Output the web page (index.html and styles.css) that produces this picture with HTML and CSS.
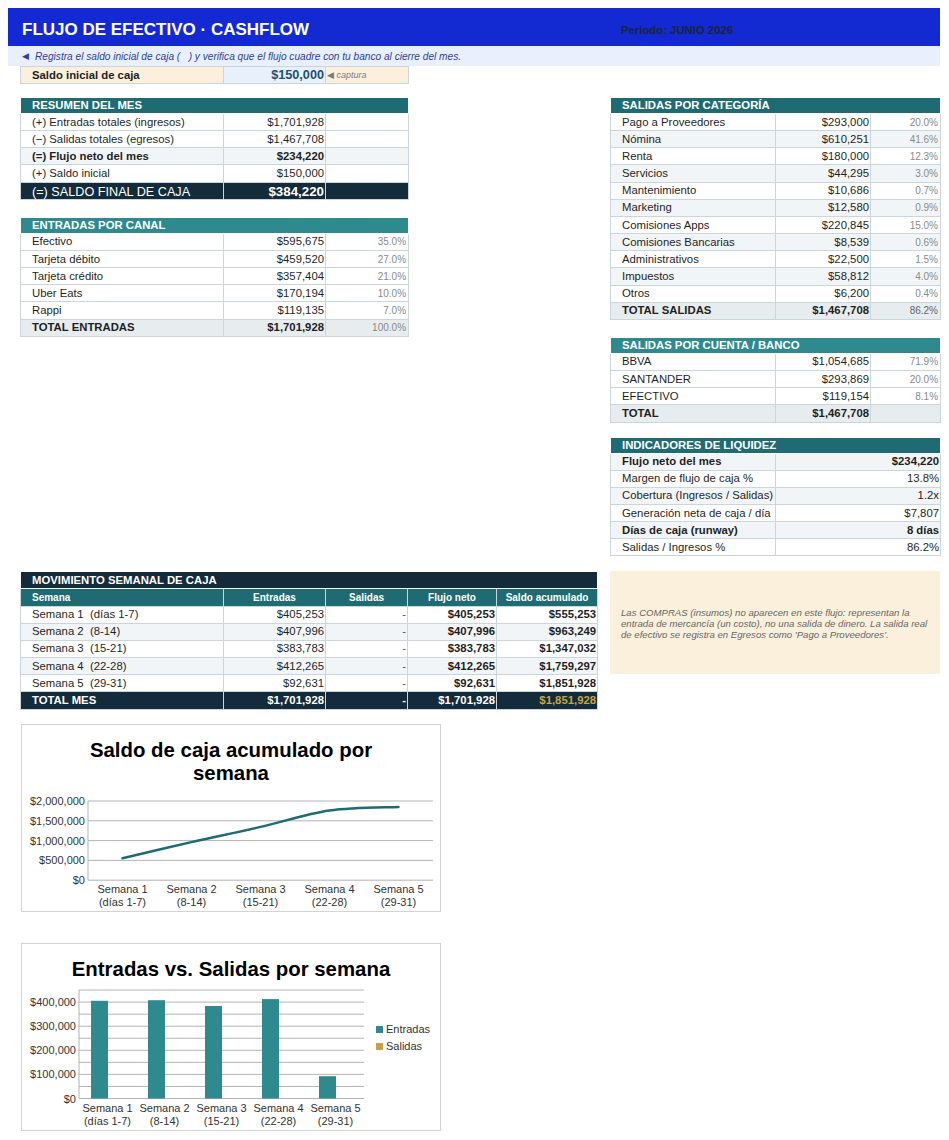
FILE: index.html
```html
<!DOCTYPE html>
<html lang="es">
<head>
<meta charset="utf-8">
<title>Flujo de efectivo · Cashflow</title>
<link rel="stylesheet" href="styles.css">
</head>
<body>
<header class="banner">
  <div class="banner-top">
    <h1>FLUJO DE EFECTIVO · CASHFLOW</h1>
    <span class="period">Periodo: JUNIO 2026</span>
  </div>
  <div class="banner-sub"><span class="arrow">◀</span><span class="sub-text">Registra el saldo inicial de caja (   ) y verifica que el flujo cuadre con tu banco al cierre del mes.</span></div>
</header>

<main class="sheet">
  <table class="grid saldo">
    <colgroup><col class="c-a"><col class="c-b"><col class="c-c"></colgroup>
    <tr>
      <td class="lbl bold cream">Saldo inicial de caja</td>
      <td class="num input">$150,000</td>
      <td class="cream hint">◀ captura</td>
    </tr>
  </table>

  <div class="top-grid">
    <div class="col-left">
      <table class="grid">
        <colgroup><col class="c-a"><col class="c-b"><col class="c-c"></colgroup>
        <tr class="sec dark"><td colspan="3">RESUMEN DEL MES</td></tr>
        <tr><td class="lbl">(+) Entradas totales (ingresos)</td><td class="num">$1,701,928</td><td></td></tr>
        <tr><td class="lbl">(−) Salidas totales (egresos)</td><td class="num">$1,467,708</td><td></td></tr>
        <tr class="alt bold"><td class="lbl">(=) Flujo neto del mes</td><td class="num">$234,220</td><td></td></tr>
        <tr><td class="lbl">(+) Saldo inicial</td><td class="num">$150,000</td><td></td></tr>
        <tr class="final"><td class="lbl">(=) SALDO FINAL DE CAJA</td><td class="num">$384,220</td><td></td></tr>
      </table>

      <table class="grid gap17">
        <colgroup><col class="c-a"><col class="c-b"><col class="c-c"></colgroup>
        <tr class="sec light"><td colspan="3">ENTRADAS POR CANAL</td></tr>
        <tr><td class="lbl">Efectivo</td><td class="num">$595,675</td><td class="pct">35.0%</td></tr>
        <tr><td class="lbl">Tarjeta débito</td><td class="num">$459,520</td><td class="pct">27.0%</td></tr>
        <tr><td class="lbl">Tarjeta crédito</td><td class="num">$357,404</td><td class="pct">21.0%</td></tr>
        <tr><td class="lbl">Uber Eats</td><td class="num">$170,194</td><td class="pct">10.0%</td></tr>
        <tr><td class="lbl">Rappi</td><td class="num">$119,135</td><td class="pct">7.0%</td></tr>
        <tr class="total"><td class="lbl bold">TOTAL ENTRADAS</td><td class="num bold">$1,701,928</td><td class="pct">100.0%</td></tr>
      </table>
    </div>

    <div class="col-right">
      <table class="grid">
        <colgroup><col class="r-a"><col class="r-b"><col class="r-c"></colgroup>
        <tr class="sec dark"><td colspan="3">SALIDAS POR CATEGORÍA</td></tr>
        <tr><td class="lbl">Pago a Proveedores</td><td class="num">$293,000</td><td class="pct">20.0%</td></tr>
        <tr class="alt"><td class="lbl">Nómina</td><td class="num">$610,251</td><td class="pct">41.6%</td></tr>
        <tr><td class="lbl">Renta</td><td class="num">$180,000</td><td class="pct">12.3%</td></tr>
        <tr class="alt"><td class="lbl">Servicios</td><td class="num">$44,295</td><td class="pct">3.0%</td></tr>
        <tr><td class="lbl">Mantenimiento</td><td class="num">$10,686</td><td class="pct">0.7%</td></tr>
        <tr class="alt"><td class="lbl">Marketing</td><td class="num">$12,580</td><td class="pct">0.9%</td></tr>
        <tr><td class="lbl">Comisiones Apps</td><td class="num">$220,845</td><td class="pct">15.0%</td></tr>
        <tr class="alt"><td class="lbl">Comisiones Bancarias</td><td class="num">$8,539</td><td class="pct">0.6%</td></tr>
        <tr><td class="lbl">Administrativos</td><td class="num">$22,500</td><td class="pct">1.5%</td></tr>
        <tr class="alt"><td class="lbl">Impuestos</td><td class="num">$58,812</td><td class="pct">4.0%</td></tr>
        <tr><td class="lbl">Otros</td><td class="num">$6,200</td><td class="pct">0.4%</td></tr>
        <tr class="total"><td class="lbl bold">TOTAL SALIDAS</td><td class="num bold">$1,467,708</td><td class="pct strong">86.2%</td></tr>
      </table>

      <table class="grid gap17">
        <colgroup><col class="r-a"><col class="r-b"><col class="r-c"></colgroup>
        <tr class="sec light"><td colspan="3">SALIDAS POR CUENTA / BANCO</td></tr>
        <tr><td class="lbl">BBVA</td><td class="num">$1,054,685</td><td class="pct">71.9%</td></tr>
        <tr><td class="lbl">SANTANDER</td><td class="num">$293,869</td><td class="pct">20.0%</td></tr>
        <tr><td class="lbl">EFECTIVO</td><td class="num">$119,154</td><td class="pct">8.1%</td></tr>
        <tr class="total"><td class="lbl bold">TOTAL</td><td class="num bold">$1,467,708</td><td></td></tr>
      </table>

      <table class="grid gap14">
        <colgroup><col class="r-a"><col class="r-bc"></colgroup>
        <tr class="sec dark"><td colspan="2">INDICADORES DE LIQUIDEZ</td></tr>
        <tr class="alt bold"><td class="lbl">Flujo neto del mes</td><td class="num">$234,220</td></tr>
        <tr><td class="lbl">Margen de flujo de caja %</td><td class="num">13.8%</td></tr>
        <tr class="alt"><td class="lbl">Cobertura (Ingresos / Salidas)</td><td class="num">1.2x</td></tr>
        <tr><td class="lbl">Generación neta de caja / día</td><td class="num">$7,807</td></tr>
        <tr class="alt bold"><td class="lbl">Días de caja (runway)</td><td class="num">8 días</td></tr>
        <tr><td class="lbl">Salidas / Ingresos %</td><td class="num">86.2%</td></tr>
      </table>
    </div>
  </div>

  <div class="mid-row">
    <table class="grid mov">
      <colgroup><col class="m-a"><col class="m-b"><col class="m-c"><col class="m-d"><col class="m-e"></colgroup>
      <tr class="sec navy"><td colspan="5">MOVIMIENTO SEMANAL DE CAJA</td></tr>
      <tr class="colhead"><td class="lbl">Semana</td><td>Entradas</td><td>Salidas</td><td>Flujo neto</td><td>Saldo acumulado</td></tr>
      <tr><td class="lbl pre">Semana 1  (días 1-7)</td><td class="num">$405,253</td><td class="num dash">-</td><td class="num bold">$405,253</td><td class="num bold">$555,253</td></tr>
      <tr class="alt"><td class="lbl pre">Semana 2  (8-14)</td><td class="num">$407,996</td><td class="num dash">-</td><td class="num bold">$407,996</td><td class="num bold">$963,249</td></tr>
      <tr><td class="lbl pre">Semana 3  (15-21)</td><td class="num">$383,783</td><td class="num dash">-</td><td class="num bold">$383,783</td><td class="num bold">$1,347,032</td></tr>
      <tr class="alt"><td class="lbl pre">Semana 4  (22-28)</td><td class="num">$412,265</td><td class="num dash">-</td><td class="num bold">$412,265</td><td class="num bold">$1,759,297</td></tr>
      <tr><td class="lbl pre">Semana 5  (29-31)</td><td class="num">$92,631</td><td class="num dash">-</td><td class="num bold">$92,631</td><td class="num bold">$1,851,928</td></tr>
      <tr class="movtotal"><td class="lbl">TOTAL MES</td><td class="num">$1,701,928</td><td class="num">-</td><td class="num">$1,701,928</td><td class="num gold">$1,851,928</td></tr>
    </table>
    <div class="note">
      <p>Las COMPRAS (insumos) no aparecen en este flujo: representan la entrada de mercancía (un costo), no una salida de dinero. La salida real de efectivo se registra en Egresos como 'Pago a Proveedores'.</p>
    </div>
  </div>

  <section class="chart chart-line">
    <svg width="418" height="186" viewBox="1 1 418 186" xmlns="http://www.w3.org/2000/svg">
      <text class="ch-title" x="210" y="33">Saldo de caja acumulado por</text>
      <text class="ch-title" x="210" y="56">semana</text>
      <g class="gridlines">
        <line x1="67" y1="77" x2="412" y2="77"/>
        <line x1="67" y1="96.8" x2="412" y2="96.8"/>
        <line x1="67" y1="116.6" x2="412" y2="116.6"/>
        <line x1="67" y1="136.4" x2="412" y2="136.4"/>
        <line x1="67" y1="156.2" x2="412" y2="156.2"/>
        <line x1="67" y1="77" x2="67" y2="156.2"/>
      </g>
      <g class="ylab">
        <text x="64" y="81">$2,000,000</text>
        <text x="64" y="100.8">$1,500,000</text>
        <text x="64" y="120.6">$1,000,000</text>
        <text x="64" y="140.4">$500,000</text>
        <text x="64" y="160.2">$0</text>
      </g>
      <g class="xlab">
        <text x="101.5" y="169">Semana 1</text><text x="101.5" y="182">(días 1-7)</text>
        <text x="170.5" y="169">Semana 2</text><text x="170.5" y="182">(8-14)</text>
        <text x="239.5" y="169">Semana 3</text><text x="239.5" y="182">(15-21)</text>
        <text x="308.5" y="169">Semana 4</text><text x="308.5" y="182">(22-28)</text>
        <text x="377.5" y="169">Semana 5</text><text x="377.5" y="182">(29-31)</text>
      </g>
      <path class="series" d="M101.5 134.2 C113 131.5 147.5 123.3 170.5 118.1 C193.5 112.9 216.5 108.2 239.5 102.9 C262.5 97.6 285.5 89.8 308.5 86.5 C331.5 83.2 366 83.5 377.5 82.9"/>
    </svg>
  </section>

  <section class="chart chart-bar">
    <svg width="418" height="186" viewBox="1 1 418 186" xmlns="http://www.w3.org/2000/svg">
      <text class="ch-title" x="210" y="33">Entradas vs. Salidas por semana</text>
      <g class="gridlines">
        <line x1="58" y1="47.05" x2="343" y2="47.05"/>
        <line x1="58" y1="59.1" x2="343" y2="59.1"/>
        <line x1="58" y1="71.15" x2="343" y2="71.15"/>
        <line x1="58" y1="83.2" x2="343" y2="83.2"/>
        <line x1="58" y1="95.25" x2="343" y2="95.25"/>
        <line x1="58" y1="107.3" x2="343" y2="107.3"/>
        <line x1="58" y1="119.35" x2="343" y2="119.35"/>
        <line x1="58" y1="131.4" x2="343" y2="131.4"/>
        <line x1="58" y1="143.45" x2="343" y2="143.45"/>
        <line x1="58" y1="155.5" x2="343" y2="155.5"/>
        <line x1="58" y1="47.05" x2="58" y2="155.5"/>
      </g>
      <g class="ylab">
        <text x="55" y="63.1">$400,000</text>
        <text x="55" y="87.2">$300,000</text>
        <text x="55" y="111.3">$200,000</text>
        <text x="55" y="135.4">$100,000</text>
        <text x="55" y="159.5">$0</text>
      </g>
      <g class="bars">
        <rect x="70" y="57.8" width="17" height="97.7"/>
        <rect x="127" y="57.2" width="17" height="98.3"/>
        <rect x="184" y="63" width="17" height="92.5"/>
        <rect x="241" y="56.1" width="17" height="99.4"/>
        <rect x="298" y="133.2" width="17" height="22.3"/>
      </g>
      <g class="xlab">
        <text x="86.5" y="168.5">Semana 1</text><text x="86.5" y="181.5">(días 1-7)</text>
        <text x="143.5" y="168.5">Semana 2</text><text x="143.5" y="181.5">(8-14)</text>
        <text x="200.5" y="168.5">Semana 3</text><text x="200.5" y="181.5">(15-21)</text>
        <text x="257.5" y="168.5">Semana 4</text><text x="257.5" y="181.5">(22-28)</text>
        <text x="314.5" y="168.5">Semana 5</text><text x="314.5" y="181.5">(29-31)</text>
      </g>
      <g class="legend">
        <rect class="sw-in" x="355" y="83" width="7" height="7"/>
        <text x="365" y="90">Entradas</text>
        <rect class="sw-out" x="355" y="100" width="7" height="7"/>
        <text x="365" y="107">Salidas</text>
      </g>
    </svg>
  </section>
</main>
</body>
</html>
```

FILE: styles.css
```css
* { box-sizing: border-box; }

body {
  margin: 0;
  background: #ffffff;
  color: #1f1f1f;
  font-family: "Liberation Sans", Arial, "DejaVu Sans", sans-serif;
}

/* ---------- banner ---------- */
.banner {
  margin: 8px 9px 0 8px;
}
.banner-top {
  height: 38px;
  background: #132ad3;
  display: grid;
  grid-template-columns: 599px 1fr;
  align-items: center;
  padding: 6px 0 0 14px;
}
.banner-top h1 {
  margin: 0;
  font-size: 17px;
  font-weight: bold;
  color: #ffffff;
  line-height: 20px;
}
.period {
  font-size: 11.33px;
  font-weight: bold;
  color: #1c2433;
}
.banner-sub {
  height: 20px;
  background: #eaeffd;
  display: flex;
  align-items: center;
  padding-left: 14px;
  color: #2a3f9e;
  font-size: 10.15px;
  font-style: italic;
}
.banner-sub .arrow {
  font-style: normal;
  font-size: 9px;
  width: 13px;
  font-family: "DejaVu Sans", sans-serif;
}
.banner-sub .sub-text { white-space: pre; }

/* ---------- sheet ---------- */
.sheet {
  padding-left: 20px;
  padding-bottom: 9px;
}

.grid {
  border-collapse: collapse;
  table-layout: fixed;
  font-size: 11.33px;
  color: #1f1f1f;
}
.grid td {
  border: 1px solid #cbd5dc;
  height: 17.17px;
  padding: 0 1px;
  white-space: nowrap;
  overflow: hidden;
  line-height: 13px;
}
.grid .lbl { padding-left: 11px; text-align: left; }
.grid .num { text-align: right; }
.grid .pct { text-align: right; color: #8a8a8a; font-size: 10px; padding-right: 2px; }
.grid .pct.strong { color: #666666; }
.bold, .bold td { font-weight: bold; }
.pre { white-space: pre !important; }

.c-a { width: 203px; }
.c-b { width: 102px; }
.c-c { width: 83px; }
.r-a { width: 165px; }
.r-b { width: 95px; }
.r-c { width: 70px; }
.r-bc { width: 165px; }

.gap17 { margin-top: 17px; }
.gap14 { margin-top: 14px; }

/* section header rows */
.sec td {
  height: 16px;
  color: #ffffff;
  font-weight: bold;
  padding-left: 11px;
  border-color: transparent;
}
.sec.dark td { background: #1e6b73; }
.sec.light td { background: #2e8a8f; }
.sec.navy td { background: #132b3b; height: 17px; }

.alt td { background: #f2f5f7; }
.total td { background: #e7ecef; }

.final td {
  background: #132b3b;
  color: #ffffff;
  font-size: 12.67px;
  line-height: 14px;
  padding-top: 2px;
  border-color: #cbd5dc;
}
.final .num { font-weight: bold; font-size: 13.33px; }

/* saldo inicial */
.saldo { width: 388px; margin-top: 0; }
.saldo td { height: 17px; }
.cream { background: #fbf0dc; }
.input {
  background: #e8f1fb;
  color: #1f4e79;
  font-weight: bold;
  font-size: 12.67px;
}
.hint {
  color: #7a7a7a;
  font-style: italic;
  font-size: 9px;
  padding-left: 1px !important;
}

/* layout */
.top-grid {
  display: grid;
  grid-template-columns: 388px 330px;
  column-gap: 202px;
  margin-top: 13px;
  align-items: start;
}
.col-left .grid { width: 388px; }
.col-right .grid { width: 330px; }

.mid-row {
  display: grid;
  grid-template-columns: 577px 330px;
  column-gap: 13px;
  margin-top: 15px;
  align-items: start;
}

/* movimiento semanal */
.mov { width: 577px; }
.m-a { width: 203px; }
.m-b { width: 102px; }
.m-c { width: 82px; }
.m-d { width: 89px; }
.m-e { width: 101px; }
.colhead td {
  background: #1e6b73;
  color: #ffffff;
  font-weight: bold;
  font-size: 10px;
  text-align: center;
}
.colhead td.lbl { text-align: left; }
.dash { color: #555555; }
.movtotal td {
  background: #132b3b;
  color: #ffffff;
  font-weight: bold;
}
.movtotal .gold { color: #c9a245; }

/* note */
.note {
  height: 103px;
  background: #fbf0dc;
  display: flex;
  align-items: center;
  padding: 2px 9px 0 11px;
}
.note p {
  margin: 0;
  font-size: 9.6px;
  line-height: 11px;
  font-style: italic;
  color: #666666;
}

/* charts */
.chart {
  width: 420px;
  height: 188px;
  border: 1px solid #d3d3d3;
  margin-left: 1px;
  background: #ffffff;
}
.chart svg { display: block; }
.chart-line { margin-top: 14px; }
.chart-bar { margin-top: 31px; }

.ch-title {
  font-family: "Liberation Sans", Arial, sans-serif;
  font-size: 20.4px;
  font-weight: bold;
  fill: #000000;
  text-anchor: middle;
}
.gridlines line { stroke: #b3b3b3; stroke-width: 1; }
.ylab text {
  font-family: "Liberation Sans", Arial, sans-serif;
  font-size: 11px;
  fill: #333333;
  text-anchor: end;
}
.xlab text {
  font-family: "Liberation Sans", Arial, sans-serif;
  font-size: 11px;
  fill: #333333;
  text-anchor: middle;
}
.series { fill: none; stroke: #1e6b73; stroke-width: 2.5; stroke-linecap: round; }
.bars rect { fill: #2e8a8f; }
.legend text {
  font-family: "Liberation Sans", Arial, sans-serif;
  font-size: 11px;
  fill: #333333;
}
.sw-in { fill: #2e8a8f; }
.sw-out { fill: #c9a04a; }
```
